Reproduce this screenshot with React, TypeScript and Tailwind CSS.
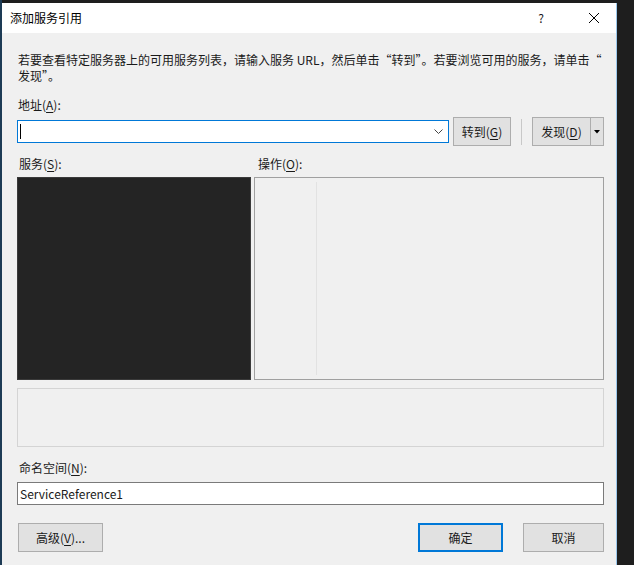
import React from "react";

const U = ({ c }: { c: string }) => <span className="underline underline-offset-2">{c}</span>;

const Btn = (props: { children: React.ReactNode; w: string; primary?: boolean }) => (
  <div
    className={`flex items-center justify-center h-[29px] ${props.w} bg-[#e1e1e1] ${
      props.primary ? "border-2 border-[#0078d7]" : "border border-[#adadad]"
    }`}
  >
    {props.children}
  </div>
);

export default function App() {
  return (
    <div
      className="w-[634px] h-[565px] bg-[#1e1e1e] flex text-[12px] text-[#1a1a1a] overflow-hidden"
      style={{ fontFamily: '"Noto Sans CJK SC", "Noto Sans", sans-serif' }}
    >
      <div className="w-[2px] bg-[#1d3b55]" />
      <div className="flex flex-col w-[615px] mt-[3px] border-r border-[#9cc8ec] bg-[#f0f0f0]">
        {/* title bar */}
        <div className="h-[30px] bg-white flex items-center pl-[8px]">
          <span className="text-[12px] text-black">添加服务引用</span>
          <span className="ml-auto mr-[44px] text-[12px]">?</span>
          <svg width="12" height="12" viewBox="0 0 12 12" className="mr-[16px]">
            <path d="M1 1L11 11M11 1L1 11" stroke="#000" strokeWidth="1" />
          </svg>
        </div>

        {/* body */}
        <div className="flex flex-col pl-[15px] pr-[12px] pt-[19px] leading-[16px]">
          <div className="pl-[1px]">
            若要查看特定服务器上的可用服务列表，请输入服务 URL，然后单击“转到”。若要浏览可用的服务，请单击“
            <br />
            发现”。
          </div>

          <div className="mt-[13px] pl-[1px]">
            地址(<U c="A" />):
          </div>

          <div className="flex items-center mt-[4px]">
            <div className="w-[434px] h-[23px] bg-white border border-[#0078d7] flex items-center pl-[2px] pr-[5px]">
              <div className="w-px h-[15px] bg-black" />
              <svg width="9" height="6" viewBox="0 0 9 6" className="ml-auto">
                <path d="M0.5 0.5L4.5 4.5L8.5 0.5" stroke="#444" fill="none" strokeWidth="1" />
              </svg>
            </div>
            <div className="ml-[4px]">
              <Btn w="w-[58px]">
                转到(<U c="G" />)
              </Btn>
            </div>
            <div className="w-px h-[26px] bg-[#c8c8c8] mx-[10px]" />
            <div className="flex h-[29px] border border-[#adadad] bg-[#e1e1e1]">
              <div className="w-[58px] flex items-center justify-center border-r border-[#adadad]">
                发现(<U c="D" />)
              </div>
              <div className="w-[12px] flex items-center justify-center">
                <svg width="6" height="4" viewBox="0 0 6 4">
                  <path d="M0 0H6L3 3.5Z" fill="#000" />
                </svg>
              </div>
            </div>
          </div>

          <div className="flex mt-[10px]">
            <div className="w-[238px] pl-[2px]">
              服务(<U c="S" />):
            </div>
            <div className="pl-[3px]">
              操作(<U c="O" />):
            </div>
          </div>

          <div className="flex mt-[5px] h-[203px]">
            <div className="w-[234px] bg-[#242424] border border-[#3a3a3a]" />
            <div className="ml-[3px] flex-1 border border-[#a0a0a0] bg-[#f0f0f0] flex pt-[4px] pb-[4px]">
              <div className="w-[61px]" />
              <div className="w-px bg-[#e2e2e2]" />
            </div>
          </div>

          <div className="mt-[8px] h-[59px] border border-[#d4d4d4] bg-[#f0f0f0]" />

          <div className="mt-[13px] pl-[2px]">
            命名空间(<U c="N" />):
          </div>

          <div className="mt-[6px] h-[23px] bg-white border border-[#7a7a7a] flex items-center pl-[2px]">
            ServiceReference1
          </div>

          <div className="flex mt-[18px]">
            <div className="ml-[1px]">
              <Btn w="w-[85px]">
                高级(<U c="V" />)...
              </Btn>
            </div>
            <div className="ml-auto">
              <Btn w="w-[85px]" primary>
                确定
              </Btn>
            </div>
            <div className="ml-[20px]">
              <Btn w="w-[81px]">取消</Btn>
            </div>
          </div>
        </div>
      </div>
    </div>
  );
}
